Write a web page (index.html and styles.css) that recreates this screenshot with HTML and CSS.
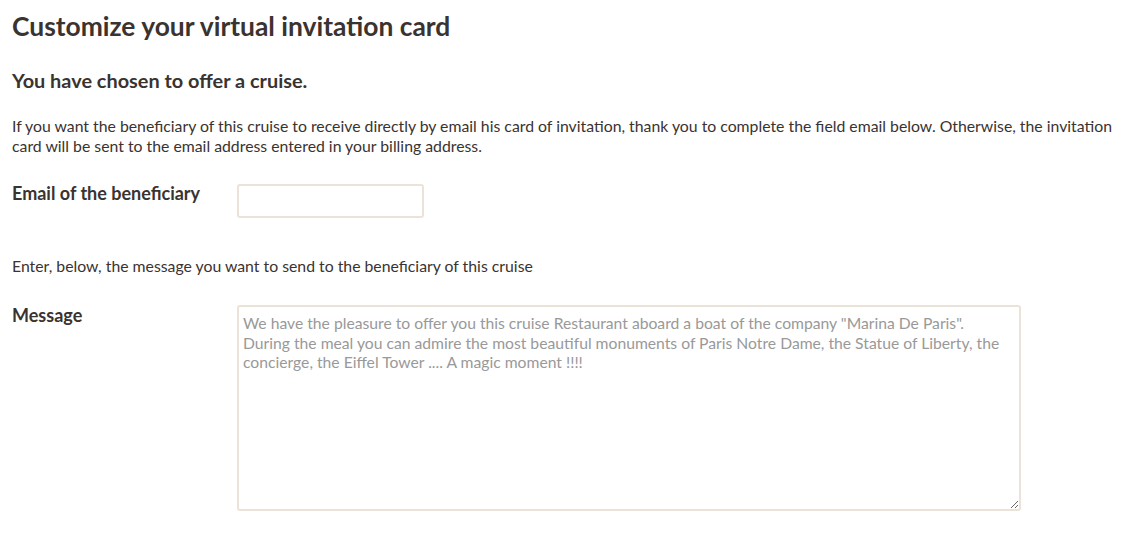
FILE: index.html
```html
<!DOCTYPE html>
<html lang="en">
<head>
  <meta charset="UTF-8" />
  <meta name="viewport" content="width=device-width, initial-scale=1" />
  <title>Customize your virtual invitation card</title>
  <link rel="stylesheet" href="styles.css">
</head>
<body>

<div class="page">
  <h1>Customize your virtual invitation card</h1>
  <h2>You have chosen to offer a cruise.</h2>

  <p class="intro">If you want the beneficiary of this cruise to receive directly by email his card of invitation, thank you to complete the field email below. Otherwise, the invitation card will be sent to the email address entered in your billing address.</p>

  <div class="field field-email">
    <label for="email">Email of the beneficiary</label>
    <input type="email" id="email" class="email-input" />
  </div>

  <p class="hint">Enter, below, the message you want to send to the beneficiary of this cruise</p>

  <div class="field field-message">
    <label for="message">Message</label>
    <textarea id="message" class="message-input" placeholder="We have the pleasure to offer you this cruise Restaurant aboard a boat of the company &quot;Marina De Paris&quot;.&#10;During the meal you can admire the most beautiful monuments of Paris Notre Dame, the Statue of Liberty, the concierge, the Eiffel Tower .... A magic moment !!!!"></textarea>
  </div>
</div>

</body>
</html>
```

FILE: styles.css
```css
body {
  font-family: 'Lato', sans-serif;
  color: #3a3330;
  background: #fff;
  margin: 0;
  padding: 0;
}
.page {
  padding: 9px 12px 20px;
}
h1 {
  font-size: 26.4px;
  font-weight: 700;
  margin: 0;
  line-height: 34px;
}
h2 {
  font-size: 19.9px;
  font-weight: 700;
  margin: 24px 0 0;
  line-height: 26px;
}
p {
  font-size: 15.8px;
  line-height: 20px;
  margin: 0;
}
.intro {
  margin-top: 23px;
}
.hint {
  margin-top: 38px;
}
.field {
  display: flex;
  align-items: flex-start;
}
.field-email {
  margin-top: 26px;
}
.field-message {
  margin-top: 28px;
}
.field label {
  width: 225px;
  flex-shrink: 0;
  font-size: 18px;
  font-weight: 700;
  line-height: 22px;
}
.email-input {
  width: 187px;
  height: 34px;
  box-sizing: border-box;
  border: 2px solid #ece3d8;
  border-radius: 3px;
  margin-top: 2px;
  font-family: inherit;
  font-size: 15px;
  padding: 4px 6px;
}
.message-input {
  width: 784px;
  height: 206px;
  box-sizing: border-box;
  border: 2px solid #ece3d8;
  border-radius: 3px;
  margin-top: 1px;
  font-family: inherit;
  font-size: 15.7px;
  line-height: 19.5px;
  padding: 7px 4px;
  color: #3a3330;
}
.message-input::placeholder {
  color: #999;
}
```
